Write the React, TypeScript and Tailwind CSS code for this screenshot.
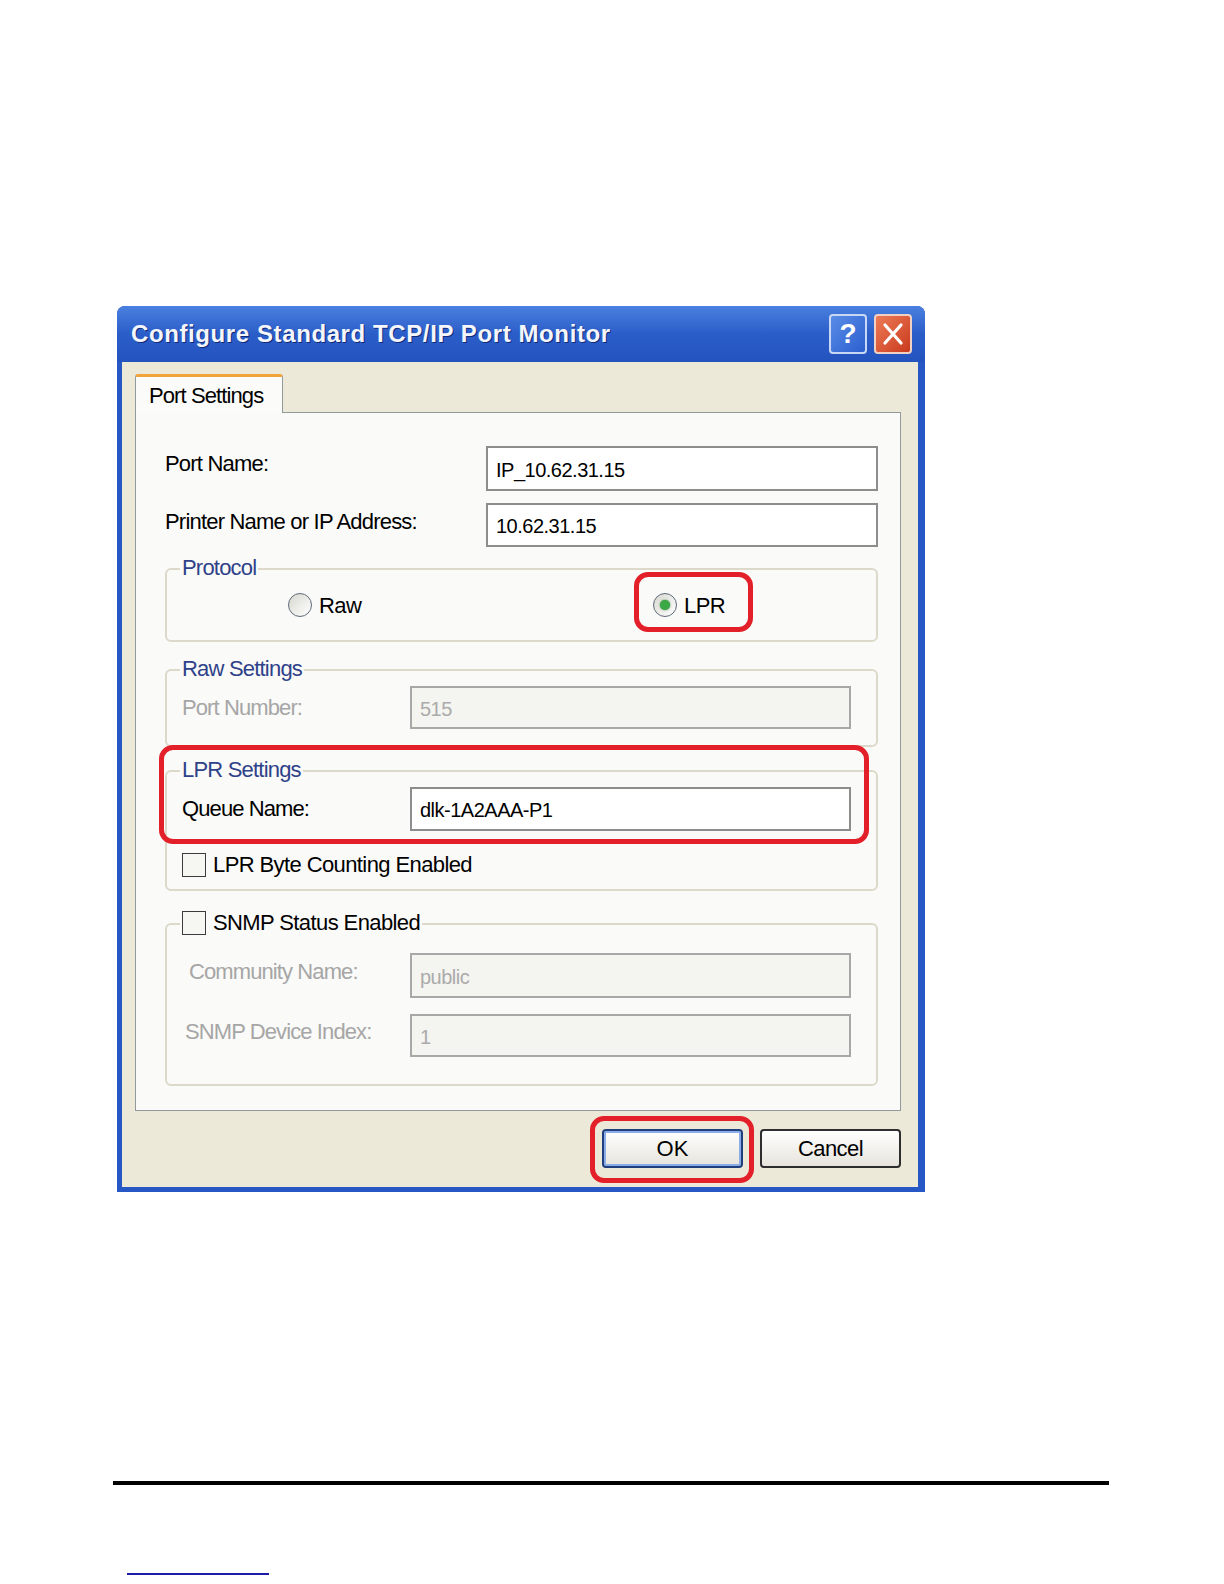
import React from 'react';

const Radio: React.FC<{ checked?: boolean }> = ({ checked }) => (
  <span className="w-[24px] h-[24px] rounded-full border-[1.5px] border-[#5d6a78] bg-linear-to-br from-[#d8d8d0] to-white flex items-center justify-center">
    {checked && <span className="w-[10px] h-[10px] rounded-full bg-[#3aa845] shadow-[0_0_2px_#2a7a30]" />}
  </span>
);

const Check: React.FC = () => (
  <span className="w-[24px] h-[24px] border-[1.5px] border-[#3c3c3c] bg-[#f6f6f2] shrink-0" />
);

interface FieldProps {
  value: string;
  width: number;
  height: number;
  disabled?: boolean;
}

const Field: React.FC<FieldProps> = ({ value, width, height, disabled }) => (
  <div
    className={`border-2 flex items-center pl-[8px] pt-[2px] text-[20px] tracking-[-0.5px] ${
      disabled ? 'border-[#a8a8a8] bg-[#f4f4f0] text-[#ababab]' : 'border-[#8d8d8d] bg-white text-black'
    }`}
    style={{ width, height }}
  >
    {value}
  </div>
);

const Legend: React.FC<{ children: React.ReactNode }> = ({ children }) => (
  <span className="absolute -top-[14px] left-[13px] px-[2px] bg-[#fafaf8] text-[22px] leading-[24px] tracking-[-0.8px] text-[#2f4289]">
    {children}
  </span>
);

const RedRing: React.FC<{ className: string }> = ({ className }) => (
  <span className={`absolute border-[5px] border-[#e3202a] rounded-[14px] pointer-events-none ${className}`} />
);

const Dialog: React.FC = () => (
  <div className="w-[808px] h-[886px] flex flex-col rounded-t-[8px] bg-[#2657c4]">
    {/* title bar */}
    <div className="h-[56px] flex items-center pl-[14px] pr-[13px] rounded-t-[8px] bg-linear-to-b from-[#4a80e0] via-[#2b5dc8] to-[#2453be]">
      <span className="text-[#f4f6fb] font-bold text-[24px] tracking-[0.6px] [text-shadow:1px_1px_0_#102a78]">
        Configure Standard TCP/IP Port Monitor
      </span>
      <div className="ml-auto flex gap-[7px]">
        <div className="w-[38px] h-[40px] rounded-[4px] border-2 border-[#c8d8f4] bg-linear-to-br from-[#5a8ce6] to-[#2c5fcf] flex items-center justify-center text-white text-[28px] font-bold leading-none">
          ?
        </div>
        <div className="w-[38px] h-[40px] rounded-[4px] border-2 border-[#f2d0c4] bg-linear-to-br from-[#ec7a56] to-[#c9381c] flex items-center justify-center">
          <svg width="22" height="24" viewBox="0 0 22 24">
            <path d="M3 3 L19 21 M19 3 L3 21" stroke="white" strokeWidth="3.2" strokeLinecap="round" />
          </svg>
        </div>
      </div>
    </div>

    {/* body */}
    <div className="flex-1 ml-[5px] mr-[7px] mb-[5px] bg-[#ece9d8] pt-[12px] pl-[13px] pr-[17px] flex flex-col">
      <div className="self-start relative z-10 -mb-[1px] h-[39px] w-[148px] bg-[#fbfbf9] border-x border-[#919b9c] border-t-[3px] border-t-[#f0a43a] rounded-t-[3px] flex items-center pl-[13px] text-[22px] tracking-[-0.9px] text-black">
        Port Settings
      </div>
      <div className="h-[699px] border border-[#919b9c] bg-[#fafaf8] pl-[29px] pr-[22px] pt-[33px] flex flex-col">
        <div className="flex items-center">
          <span className="w-[321px] text-[22px] tracking-[-0.8px] text-black -mt-[10px]">Port Name:</span>
          <Field value="IP_10.62.31.15" width={392} height={45} />
        </div>
        <div className="flex items-center mt-[12px]">
          <span className="w-[321px] text-[22px] tracking-[-0.8px] text-black -mt-[8px]">Printer Name or IP Address:</span>
          <Field value="10.62.31.15" width={392} height={44} />
        </div>

        {/* Protocol */}
        <div className="relative mt-[21px] h-[74px] w-[713px] border-2 border-[#dcd9cb] rounded-[6px] flex items-center pl-[121px]">
          <Legend>Protocol</Legend>
          <div className="w-[365px] flex items-center gap-[7px] text-[22px] tracking-[-0.6px] text-black">
            <Radio /> Raw
          </div>
          <div className="flex items-center gap-[7px] text-[22px] tracking-[-0.6px] text-black">
            <Radio checked /> LPR
          </div>
          <RedRing className="left-[467px] top-[2px] w-[119px] h-[60px]" />
        </div>

        {/* Raw Settings */}
        <div className="relative mt-[27px] h-[78px] w-[713px] border-2 border-[#dcd9cb] rounded-[6px] pt-[15px] flex items-start pl-[15px]">
          <Legend>Raw Settings</Legend>
          <span className="w-[228px] pt-[5px] text-[22px] tracking-[-0.9px] text-[#a6a6a6]">Port Number:</span>
          <Field value="515" width={441} height={43} disabled />
        </div>

        {/* LPR Settings */}
        <div className="relative mt-[23px] h-[121px] w-[713px] border-2 border-[#dcd9cb] rounded-[6px] pt-[15px] pl-[15px] flex flex-col">
          <Legend>LPR Settings</Legend>
          <div className="flex items-start">
            <span className="w-[228px] pt-[5px] text-[22px] tracking-[-0.9px] text-black">Queue Name:</span>
            <Field value="dlk-1A2AAA-P1" width={441} height={44} />
          </div>
          <div className="mt-[17px] flex items-center gap-[7px] text-[22px] tracking-[-0.6px] text-black">
            <Check /> LPR Byte Counting Enabled
          </div>
          <RedRing className="-left-[8px] -top-[27px] w-[710px] h-[99px]" />
        </div>

        {/* SNMP */}
        <div className="relative mt-[32px] h-[163px] w-[713px] border-2 border-[#dcd9cb] rounded-[6px] pt-[28px] flex flex-col">
          <span className="absolute -top-[14px] left-[13px] px-[2px] bg-[#fafaf8] flex items-center gap-[7px] text-[22px] leading-[24px] tracking-[-0.6px] text-black">
            <Check /> SNMP Status Enabled
          </span>
          <div className="flex items-center">
            <span className="w-[243px] pl-[22px] -mt-[8px] text-[22px] tracking-[-0.9px] text-[#a6a6a6]">Community Name:</span>
            <Field value="public" width={441} height={45} disabled />
          </div>
          <div className="flex items-center mt-[16px]">
            <span className="w-[243px] pl-[18px] -mt-[8px] text-[22px] tracking-[-0.9px] text-[#a6a6a6]">SNMP Device Index:</span>
            <Field value="1" width={441} height={43} disabled />
          </div>
        </div>
      </div>

      {/* buttons */}
      <div className="mt-[18px] flex justify-end gap-[17px]">
        <div className="relative">
          <div className="w-[141px] h-[39px] rounded-[4px] border-2 border-[#1f3f7e] bg-linear-to-b from-white to-[#e6e4dc] shadow-[inset_0_0_0_2px_#8cace8] flex items-center justify-center text-[22px] text-black">
            OK
          </div>
          <RedRing className="-left-[12px] -top-[13px] w-[164px] h-[67px]" />
        </div>
        <div className="w-[141px] h-[39px] rounded-[4px] border-2 border-[#2e2e2e] bg-linear-to-b from-white to-[#e6e4dc] flex items-center justify-center text-[22px] tracking-[-0.6px] text-black">
          Cancel
        </div>
      </div>
    </div>
  </div>
);

export default function App() {
  return (
    <div className="w-[1224px] h-[1584px] bg-white flex flex-col font-['Liberation_Sans',Arial,sans-serif]">
      <div className="pt-[306px] pl-[117px]">
        <Dialog />
      </div>
      <div className="mt-[289px] ml-[113px] w-[996px] h-[4px] bg-black" />
      <div className="mt-[88px] ml-[127px] w-[142px] h-[2px] bg-[#1c1ca8]" />
    </div>
  );
}
